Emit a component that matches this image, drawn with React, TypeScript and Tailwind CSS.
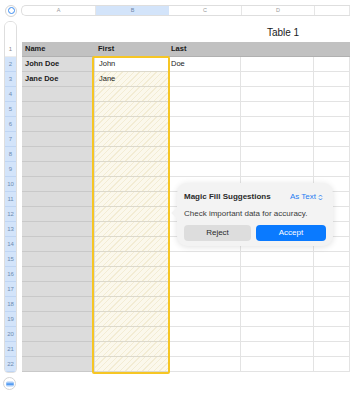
const COLS = ['A', 'B', 'C', 'D', 'E']
const ROWS = Array.from({ length: 22 }, (_, i) => i + 1)

const DATA: Record<number, string[]> = {
  1: ['Name', 'First', 'Last', '', ''],
  2: ['John Doe', 'John', 'Doe', '', ''],
  3: ['Jane Doe', 'Jane', '', '', ''],
}

const font = { fontFamily: '"Liberation Sans", Arial, sans-serif' }

function Cell({ row, col, text }: { row: number; col: number; text: string }) {
  const w = col === 4 ? 'flex-1' : 'w-[73px]'
  if (row === 1) {
    return (
      <div className={`${w} h-[15px] bg-[#c1c1c1] border-b border-[#b0b0b0] px-[3px] flex items-center text-[7.5px] font-bold text-[#1a1a1a]`}>
        {text}
      </div>
    )
  }
  if (col === 0) {
    return (
      <div className={`${w} h-[15px] bg-[#dcdcdc] border-b border-[#c9c9c9] px-[3px] flex items-center text-[7.5px] font-bold text-[#1a1a1a]`}>
        {text}
      </div>
    )
  }
  if (col === 1) {
    const bg =
      row === 2
        ? 'bg-white'
        : 'bg-[repeating-linear-gradient(135deg,#fbf8ec_0px,#fbf8ec_3px,#f3ecd3_3px,#f3ecd3_4px)]'
    return (
      <div className={`${w} h-[15px] ${bg} border-b border-[#dcd9cc] px-[4px] flex items-center text-[7.5px] text-[#1a1a1a]`}>
        {text}
      </div>
    )
  }
  return (
    <div className={`${w} h-[15px] bg-white border-b border-r border-[#e3e3e3] px-[3px] flex items-center text-[7.5px] text-[#1a1a1a]`}>
      {text}
    </div>
  )
}

export default function App() {
  return (
    <div className="relative w-[350px] h-[416px] overflow-hidden bg-white" style={font}>
      {/* Column header bar */}
      <div className="flex h-[21px] items-center">
        <div className="w-[21px] flex justify-center pl-[1px]">
          <div className="w-[12px] h-[12px] rounded-full border border-[#d4d4d4] flex items-center justify-center">
            <div className="w-[7px] h-[7px] rounded-full border-[1.5px] border-[#3b8cf0]" />
          </div>
        </div>
        <div className="flex-1 flex h-[11px] border border-r-0 border-[#dedede] rounded-l-[5px] overflow-hidden">
          {COLS.map((c, i) => (
            <div
              key={c}
              className={`${i === 4 ? 'flex-1' : i === 0 ? 'w-[74px]' : 'w-[73px]'} flex items-center justify-center text-[5.5px] ${
                i === 1 ? 'bg-[#d3e4fa] text-[#6b86a8]' : 'text-[#9a9a9a] border-r border-[#e6e6e6]'
              }`}
            >
              {i === 4 ? '' : c}
            </div>
          ))}
        </div>
      </div>

      <div className="flex">
        {/* Row header pill */}
        <div className="w-[21px] flex flex-col items-start pl-[4px]">
          <div className="w-[13px] rounded-t-[6px] rounded-b-[4px] border border-[#dedede] overflow-hidden flex flex-col">
            <div className="h-[20px] bg-white" />
            {ROWS.map((r) => (
              <div
                key={r}
                className={`h-[15px] flex items-center justify-center text-[6px] border-b ${
                  r === 1
                    ? 'bg-white text-[#8a8a8a] border-[#ececec]'
                    : 'bg-[#d3e4fa] text-[#6d8bb0] border-[#bfd5f3]'
                }`}
              >
                {r}
              </div>
            ))}
          </div>
          <div className="mt-[4px] -ml-[1px] w-[13px] h-[13px] rounded-full border border-[#d4d4d4] flex items-center justify-center">
            <svg width="8" height="6" viewBox="0 0 8 6">
              <rect x="0" y="0.5" width="8" height="5" rx="1.5" fill="#a9ccf7" />
              <rect x="0.5" y="2.5" width="7" height="1.2" fill="#2f86f0" />
            </svg>
          </div>
        </div>

        {/* Table */}
        <div className="flex-1 flex flex-col pl-[1px]">
          <div className="h-[21px] flex items-center">
            <div className="w-[328px] text-center text-[10px] text-[#1a1a1a] pl-[194px] pt-[2px]">Table 1</div>
          </div>
          {ROWS.map((r) => (
            <div key={r} className="flex">
              {COLS.map((c, ci) => (
                <Cell key={c} row={r} col={ci} text={DATA[r]?.[ci] ?? ''} />
              ))}
            </div>
          ))}
        </div>
      </div>

      {/* Selection border */}
      <div className="absolute left-[92px] top-[56px] w-[78px] h-[318px] border-2 border-[#f6c624] rounded-[2px] pointer-events-none" />

      {/* Magic Fill popover */}
      <div className="absolute left-[177px] top-[183px] w-[156px] rounded-[10px] bg-[#f3f3f3] shadow-[0_1px_6px_rgba(0,0,0,0.12)] px-[7px] pt-[8px] pb-[5px]">
        <div className="absolute -left-[4px] top-[26px] w-[8px] h-[8px] rotate-45 bg-[#f3f3f3]" />
        <div className="relative flex items-center justify-between">
          <span className="text-[8px] font-bold text-[#2a2a2a]">Magic Fill Suggestions</span>
          <span className="flex items-center gap-[2px] text-[8px] text-[#1f7cf2] pr-[3px]">
            As Text
            <svg width="5" height="7" viewBox="0 0 5 7">
              <path d="M1 2.6 L2.5 1 L4 2.6 M1 4.4 L2.5 6 L4 4.4" stroke="#1f7cf2" strokeWidth="0.9" fill="none" />
            </svg>
          </span>
        </div>
        <div className="relative mt-[5px] text-[8px] text-[#3a3a3a]">Check important data for accuracy.</div>
        <div className="relative mt-[5px] flex gap-[5px]">
          <div className="w-[67px] h-[16px] rounded-[4px] bg-[#dddddd] flex items-center justify-center text-[8px] text-[#2a2a2a]">
            Reject
          </div>
          <div className="flex-1 h-[16px] rounded-[4px] bg-[#0a7aff] flex items-center justify-center text-[8px] text-white">
            Accept
          </div>
        </div>
      </div>
    </div>
  )
}
